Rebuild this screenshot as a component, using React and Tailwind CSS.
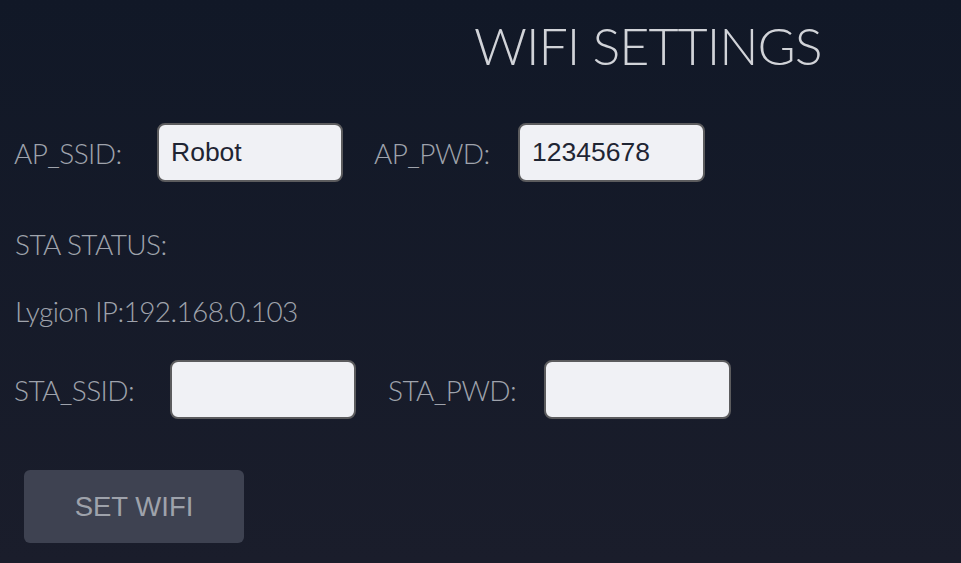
export default function App() {
  const label =
    "text-[28px] leading-none font-light tracking-[-0.6px] text-[#9fa3ac] whitespace-nowrap";
  const input =
    "h-[59px] rounded-lg border-2 border-[#5c5c5e] bg-[#f0f1f5] pl-[12px] text-[26.5px] text-[#1f2533] outline-none";
  return (
    <div
      className="w-[961px] h-[563px] overflow-hidden bg-gradient-to-b from-[#111827] to-[#1a1d2b] flex flex-col"
      style={{ fontFamily: "Lato, 'Noto Sans', sans-serif" }}
    >
      <h1 className="pt-[19px] pl-[474px] text-[52px] leading-none font-light tracking-[-1px] text-[#d1d3d8] whitespace-nowrap">
        WIFI SETTINGS
      </h1>

      <div className="mt-[52px] flex items-center pl-[14px]">
        <label className={`${label} w-[143px]`}>AP_SSID:</label>
        <input
          className={`${input} w-[186px]`}
          style={{ fontFamily: "'Liberation Sans', Arial, sans-serif" }}
          defaultValue="Robot"
        />
        <label className={`${label} ml-[31px] w-[144px]`}>AP_PWD:</label>
        <input
          className={`${input} w-[187px]`}
          style={{ fontFamily: "'Liberation Sans', Arial, sans-serif" }}
          defaultValue="12345678"
        />
      </div>

      <div className={`${label} mt-[48px] pl-[15px]`}>STA STATUS:</div>
      <div className={`${label} mt-[39px] pl-[15px]`}>Lygion IP:192.168.0.103</div>

      <div className="mt-[35px] flex items-center pl-[14px]">
        <label className={`${label} w-[156px]`}>STA_SSID:</label>
        <input
          className={`${input} w-[186px]`}
          style={{ fontFamily: "'Liberation Sans', Arial, sans-serif" }}
        />
        <label className={`${label} ml-[32px] w-[156px]`}>STA_PWD:</label>
        <input
          className={`${input} w-[187px]`}
          style={{ fontFamily: "'Liberation Sans', Arial, sans-serif" }}
        />
      </div>

      <button
        className="mt-[51px] ml-[24px] w-[220px] h-[73px] rounded-md bg-[#3e4251] text-[27.5px] text-[#9ea2ab]"
        style={{ fontFamily: "'Liberation Sans', Arial, sans-serif" }}
      >
        SET WIFI
      </button>
    </div>
  );
}
